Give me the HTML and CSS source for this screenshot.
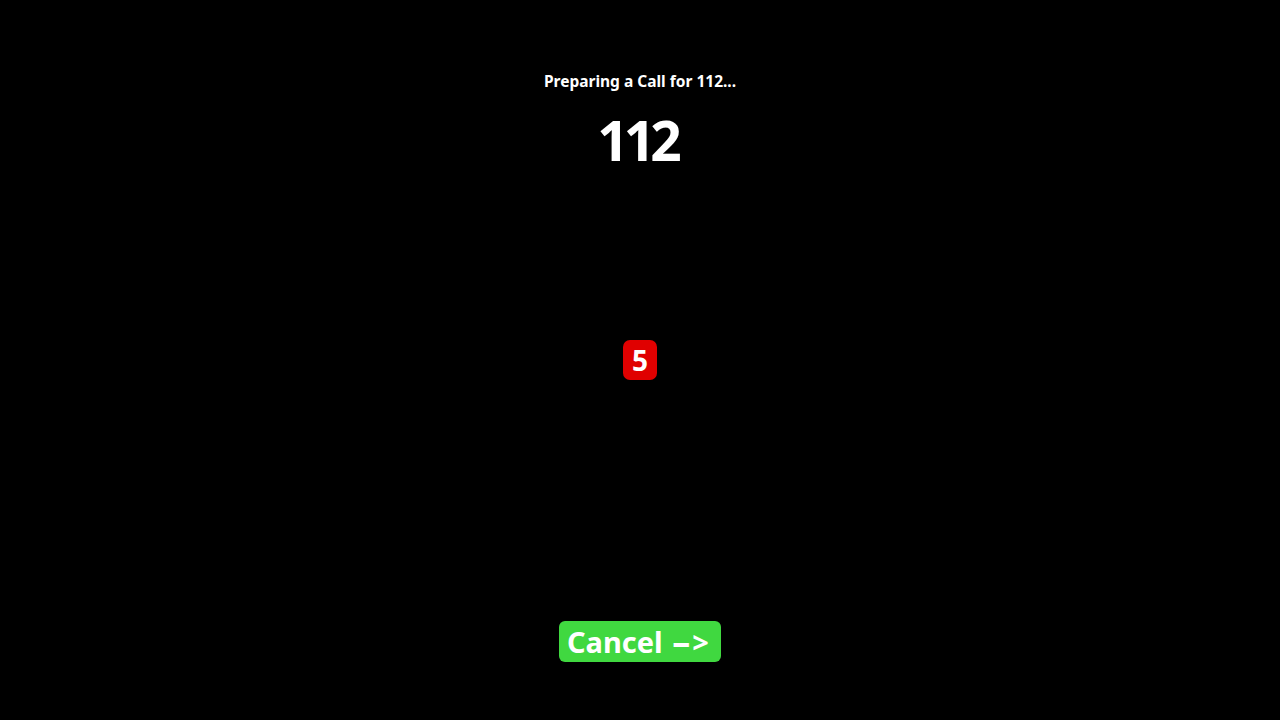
FILE: index.html
```html
<!DOCTYPE html>
<html lang="en">
<head>
<meta charset="utf-8">
<title>Preparing a Call</title>
<link rel="stylesheet" href="styles.css">
</head>
<body>
<main class="screen">
  <p class="title">Preparing a Call for 112...</p>
  <h1 class="number">112</h1>
  <div class="count">5</div>
  <button class="cancel">Cancel <span class="dash">–</span>&gt;</button>
</main>
</body>
</html>
```
FILE: styles.css
```css
html, body {
  margin: 0;
  padding: 0;
  background: #000;
}
.screen {
  width: 1280px;
  height: 720px;
  display: flex;
  flex-direction: column;
  align-items: center;
  font-family: "Noto Sans", "DejaVu Sans", sans-serif;
  color: #fff;
}
.title {
  margin: 70px 0 0;
  font-size: 15.5px;
  line-height: 22px;
  font-weight: 700;
}
.number {
  margin: 18px 0 0;
  padding-right: 6px;
  font-size: 55px;
  line-height: 60px;
  font-weight: 700;
  letter-spacing: -5px;
}
.count {
  margin-top: 170px;
  width: 34px;
  height: 40px;
  border-radius: 7px;
  background: #e00000;
  display: flex;
  align-items: center;
  justify-content: center;
  font-size: 28px;
  font-weight: 700;
}
.cancel {
  margin-top: 241px;
  width: 162px;
  height: 41px;
  border: 0;
  border-radius: 6px;
  background: #40d840;
  color: #fff;
  font-family: "Noto Sans", "DejaVu Sans", sans-serif;
  font-size: 29px;
  font-weight: 700;
  line-height: 41px;
  padding: 0 0 0 8px;
  text-align: left;
}
.dash {
  font-size: 36px;
  line-height: 0;
  margin-left: 2px;
  margin-right: 2px;
  vertical-align: -2px;
}
```
